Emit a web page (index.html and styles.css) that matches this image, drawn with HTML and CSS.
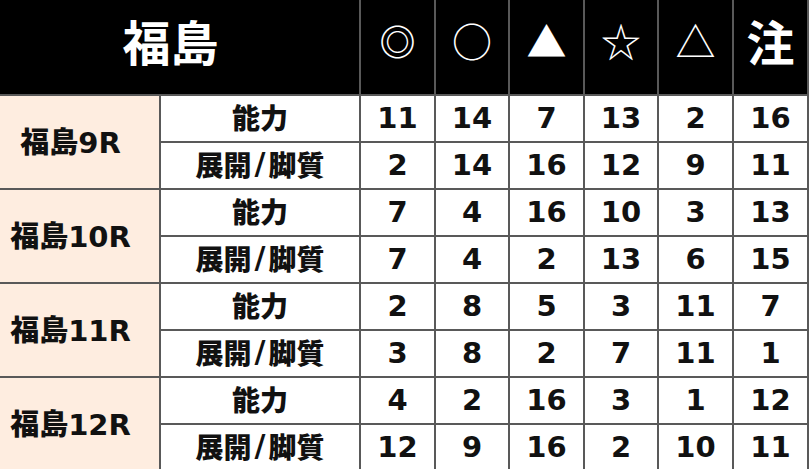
FILE: index.html
```html
<!DOCTYPE html>
<html lang="ja">
<head>
<meta charset="utf-8">
<link rel="stylesheet" href="styles.css">
</head>
<body>
<div class="sheet">
  <div class="hd title">福島</div>
  <div class="hd sym s-dbl">◎</div>
  <div class="hd sym s-circ">○</div>
  <div class="hd sym s-tri">▲</div>
  <div class="hd sym s-star">☆</div>
  <div class="hd sym s-otri">△</div>
  <div class="hd sym s-chu">注</div>

  <div class="race">福島9R</div>
  <div class="kind">能力</div>
  <div class="n">11</div><div class="n">14</div><div class="n">7</div><div class="n">13</div><div class="n">2</div><div class="n">16</div>
  <div class="kind">展開<span class="sl">/</span>脚質</div>
  <div class="n">2</div><div class="n">14</div><div class="n">16</div><div class="n">12</div><div class="n">9</div><div class="n">11</div>

  <div class="race">福島10R</div>
  <div class="kind">能力</div>
  <div class="n">7</div><div class="n">4</div><div class="n">16</div><div class="n">10</div><div class="n">3</div><div class="n">13</div>
  <div class="kind">展開<span class="sl">/</span>脚質</div>
  <div class="n">7</div><div class="n">4</div><div class="n">2</div><div class="n">13</div><div class="n">6</div><div class="n">15</div>

  <div class="race">福島11R</div>
  <div class="kind">能力</div>
  <div class="n">2</div><div class="n">8</div><div class="n">5</div><div class="n">3</div><div class="n">11</div><div class="n">7</div>
  <div class="kind">展開<span class="sl">/</span>脚質</div>
  <div class="n">3</div><div class="n">8</div><div class="n">2</div><div class="n">7</div><div class="n">11</div><div class="n">1</div>

  <div class="race">福島12R</div>
  <div class="kind">能力</div>
  <div class="n">4</div><div class="n">2</div><div class="n">16</div><div class="n">3</div><div class="n">1</div><div class="n">12</div>
  <div class="kind">展開<span class="sl">/</span>脚質</div>
  <div class="n">12</div><div class="n">9</div><div class="n">16</div><div class="n">2</div><div class="n">10</div><div class="n">11</div>
</div>
</body>
</html>
```
FILE: styles.css
```css
html, body {
  margin: 0;
  padding: 0;
  background: #ffffff;
}
body {
  width: 809px;
  height: 469px;
  overflow: hidden;
  font-family: "DejaVu Sans", "Noto Sans CJK JP", sans-serif;
  font-weight: bold;
  color: #111;
}
.sheet {
  display: grid;
  grid-template-columns: 177px 198px 73px 72px 73px 72px 73px 73px;
  grid-template-rows: 103px repeat(8, 45px);
  gap: 2px;
  padding-right: 2px;
  margin: -9px 0 0 -18px;
  width: 827px;
  box-sizing: border-box;
  background: #595959;
}
.sheet > div {
  display: flex;
  align-items: center;
  justify-content: center;
  background: #ffffff;
  white-space: nowrap;
}
.hd {
  background: #000000 !important;
  color: #ffffff;
  font-family: "Noto Sans CJK JP", sans-serif;
}
.title {
  grid-column: 1 / 3;
  font-size: 48px;
  padding-bottom: 6px;
}
.sym {
  font-size: 40px;
  font-weight: normal;
  padding-bottom: 6px;
}
.s-dbl { font-size: 36px; font-weight: bold; }
.s-chu { font-size: 48px; font-weight: bold; padding-bottom: 6px; }
.race {
  grid-row: span 2;
  background: #feede0 !important;
  font-size: 29px;
  font-weight: 900;
  padding-bottom: 5px;
}
.kind {
  font-size: 28px;
  font-weight: 900;
  padding-bottom: 4px;
}
.sl {
  font-family: "DejaVu Sans", sans-serif;
  font-weight: bold;
  font-size: 30px;
  margin: 0 3px;
}
.n {
  font-size: 29px;
  padding-bottom: 1px;
}
```
